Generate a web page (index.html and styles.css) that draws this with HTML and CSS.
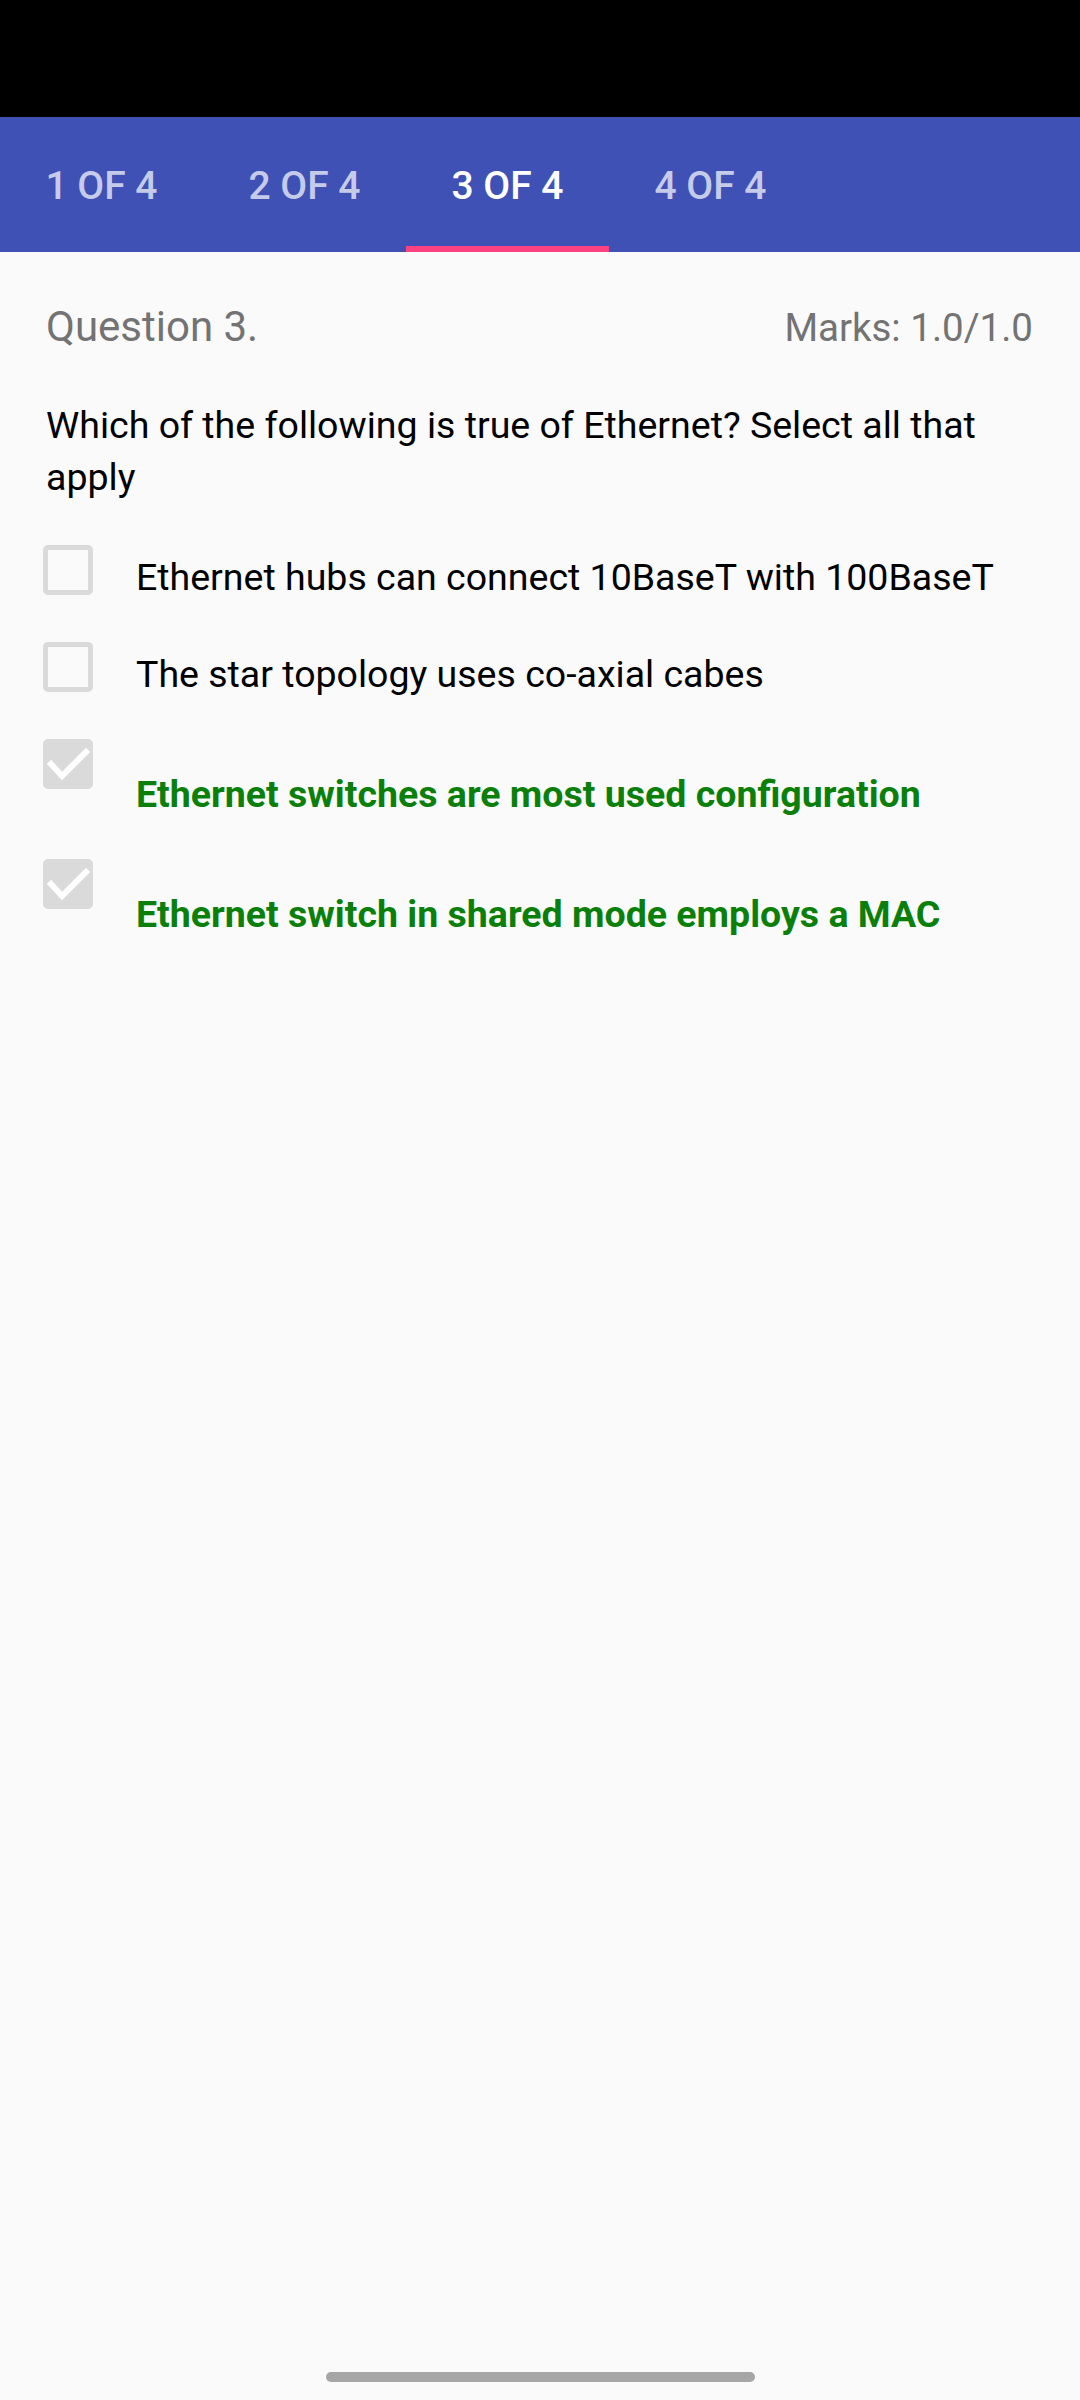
FILE: index.html
```html
<!DOCTYPE html>
<html>
<head>
<meta charset="utf-8">
<link rel="stylesheet" href="styles.css">
</head>
<body>
<div class="screen">
  <div class="statusbar"></div>
  <nav class="tabs">
    <div class="tab">1 OF 4</div>
    <div class="tab">2 OF 4</div>
    <div class="tab active">3 OF 4</div>
    <div class="tab">4 OF 4</div>
  </nav>
  <main class="content">
    <div class="qhead">
      <span class="qnum">Question 3.</span>
      <span class="marks">Marks: 1.0/1.0</span>
    </div>
    <p class="qtext">Which of the following is true of Ethernet? Select all that apply</p>
    <ul class="options">
      <li class="option">
        <span class="box"></span>
        <span class="label">Ethernet hubs can connect 10BaseT with 100BaseT</span>
      </li>
      <li class="option">
        <span class="box"></span>
        <span class="label">The star topology uses co-axial cabes</span>
      </li>
      <li class="option correct">
        <span class="box checked"><svg viewBox="0 0 50 50" width="50" height="50"><polyline points="8,25 19,37 43,13" fill="none" stroke="#ffffff" stroke-width="6" stroke-linecap="square"/></svg></span>
        <span class="label">Ethernet switches are most used configuration</span>
      </li>
      <li class="option correct">
        <span class="box checked"><svg viewBox="0 0 50 50" width="50" height="50"><polyline points="8,25 19,37 43,13" fill="none" stroke="#ffffff" stroke-width="6" stroke-linecap="square"/></svg></span>
        <span class="label">Ethernet switch in shared mode employs a MAC</span>
      </li>
    </ul>
  </main>
  <div class="homebar"></div>
</div>
</body>
</html>
```
FILE: styles.css
```css
html, body {
  margin: 0;
  padding: 0;
}
body {
  background: #fafafa;
  font-family: Roboto, "Noto Sans", "Liberation Sans", sans-serif;
}
.screen {
  position: relative;
  width: 1080px;
  height: 2400px;
  background: #fafafa;
  overflow: hidden;
}
.statusbar {
  height: 117px;
  background: #000;
}
.tabs {
  display: flex;
  height: 135px;
  background: #3f51b5;
}
.tab {
  position: relative;
  width: 203px;
  box-sizing: border-box;
  padding-top: 47px;
  text-align: center;
  font-size: 39px;
  line-height: 44px;
  font-weight: 500;
  color: #c5cbe9;
}
.tab.active {
  color: #ffffff;
}
.tab.active::after {
  content: "";
  position: absolute;
  left: 0;
  right: 0;
  bottom: 0;
  height: 6px;
  background: #ff4081;
}
.content {
  padding: 50px 47px 0 46px;
}
.qhead {
  display: flex;
  justify-content: space-between;
  align-items: baseline;
  line-height: 50px;
  color: #737373;
}
.qnum {
  font-size: 42px;
}
.marks {
  font-size: 38.5px;
}
.qtext {
  margin: 46px 0 0 0;
  font-size: 37.5px;
  line-height: 52px;
  color: #000;
}
.options {
  list-style: none;
  margin: 42px 0 0 -3px;
  padding: 0;
  display: flex;
  flex-direction: column;
  gap: 43px;
}
.option {
  display: flex;
  align-items: flex-start;
  gap: 43px;
}
.box {
  flex: none;
  width: 50px;
  height: 50px;
  box-sizing: border-box;
  border: 5px solid #dadada;
  border-radius: 5px;
  background: #fafafa;
}
.box.checked {
  border: none;
  background: #dadada;
}
.box svg {
  display: block;
}
.label {
  padding-top: 10px;
  font-size: 37.5px;
  line-height: 44px;
  color: #000;
}
.correct .label {
  padding-top: 33px;
  font-weight: 700;
  color: #0a800a;
}
.homebar {
  position: absolute;
  left: 326px;
  width: 429px;
  bottom: 18px;
  height: 10px;
  border-radius: 5px;
  background: #a6a6a6;
}
```
